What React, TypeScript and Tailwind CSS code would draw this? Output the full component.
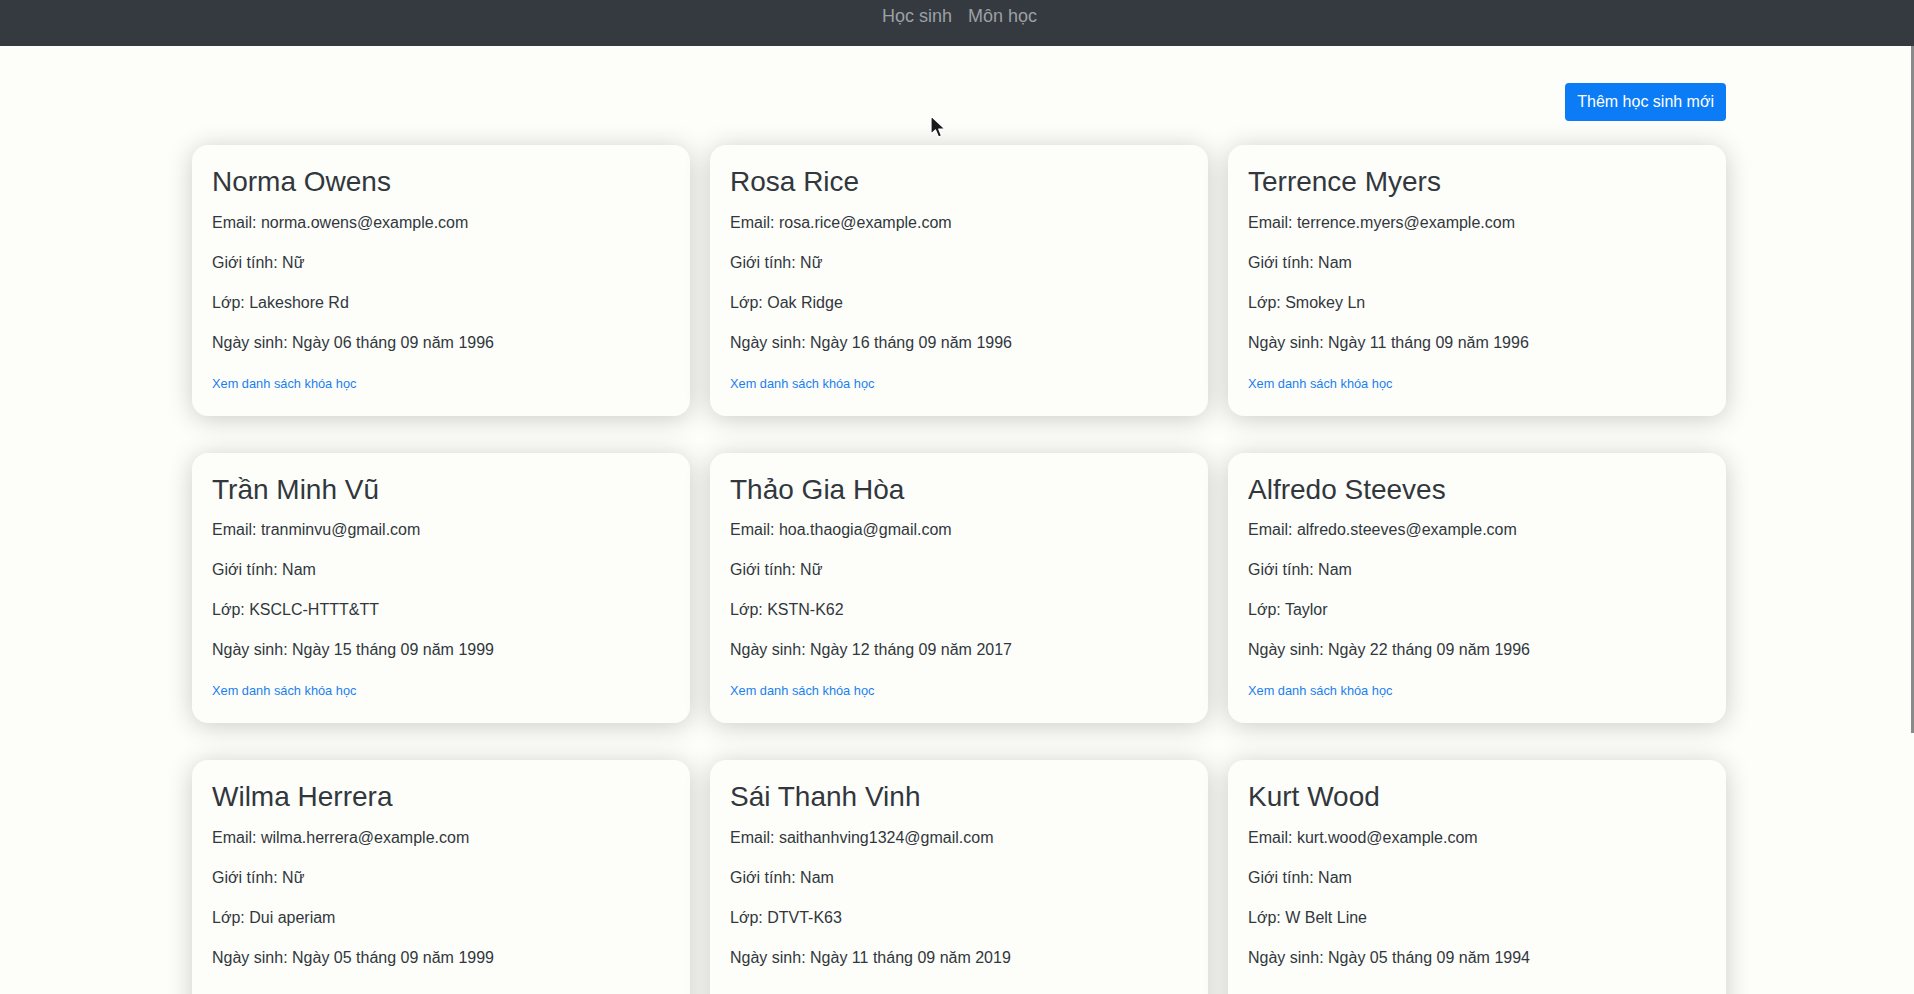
import React from "react";

type Student = {
  name: string;
  email: string;
  gender: string;
  cls: string;
  dob: string;
};

const students: Student[] = [
  { name: "Norma Owens", email: "norma.owens@example.com", gender: "Nữ", cls: "Lakeshore Rd", dob: "Ngày 06 tháng 09 năm 1996" },
  { name: "Rosa Rice", email: "rosa.rice@example.com", gender: "Nữ", cls: "Oak Ridge", dob: "Ngày 16 tháng 09 năm 1996" },
  { name: "Terrence Myers", email: "terrence.myers@example.com", gender: "Nam", cls: "Smokey Ln", dob: "Ngày 11 tháng 09 năm 1996" },
  { name: "Trần Minh Vũ", email: "tranminvu@gmail.com", gender: "Nam", cls: "KSCLC-HTTT&TT", dob: "Ngày 15 tháng 09 năm 1999" },
  { name: "Thảo Gia Hòa", email: "hoa.thaogia@gmail.com", gender: "Nữ", cls: "KSTN-K62", dob: "Ngày 12 tháng 09 năm 2017" },
  { name: "Alfredo Steeves", email: "alfredo.steeves@example.com", gender: "Nam", cls: "Taylor", dob: "Ngày 22 tháng 09 năm 1996" },
  { name: "Wilma Herrera", email: "wilma.herrera@example.com", gender: "Nữ", cls: "Dui aperiam", dob: "Ngày 05 tháng 09 năm 1999" },
  { name: "Sái Thanh Vinh", email: "saithanhving1324@gmail.com", gender: "Nam", cls: "DTVT-K63", dob: "Ngày 11 tháng 09 năm 2019" },
  { name: "Kurt Wood", email: "kurt.wood@example.com", gender: "Nam", cls: "W Belt Line", dob: "Ngày 05 tháng 09 năm 1994" },
];

function Card({ s }: { s: Student }) {
  return (
    <div className="rounded-[16px] bg-[#fdfefa] px-5 py-5 shadow-[0_3px_26px_rgba(0,0,0,0.2)]">
      <h3 className="mb-3 text-[28px] leading-[1.2] font-normal">{s.name}</h3>
      <p className="mb-4 text-base leading-6">Email: {s.email}</p>
      <p className="mb-4 text-base leading-6">Giới tính: {s.gender}</p>
      <p className="mb-4 text-base leading-6">Lớp: {s.cls}</p>
      <p className="mb-4 text-base leading-6">Ngày sinh: {s.dob}</p>
      <div className="text-base leading-6">
        <a className="text-[12.8px] text-[#1a7ff0]">Xem danh sách khóa học</a>
      </div>
    </div>
  );
}

export default function App() {
  return (
    <div
      className="relative h-[994px] overflow-hidden bg-[#fdfefa] text-[#31373d]"
      style={{ fontFamily: '"Liberation Sans", Arial, sans-serif' }}
    >
      <header className="flex h-[46px] justify-center bg-[#343a40] pt-[3px] pl-[5px]">
        <nav className="flex">
          <a className="px-2 text-[18px] leading-[27px] text-[#9da0a4]">Học sinh</a>
          <a className="px-2 text-[18px] leading-[27px] text-[#9da0a4]">Môn học</a>
        </nav>
      </header>
      <main className="ml-[192px] w-[1534px]">
        <div className="flex justify-end pt-[37px] pb-[24px]">
          <button className="h-[38px] rounded-[4px] bg-[#0b7cf5] px-3 text-base leading-6 text-white">
            Thêm học sinh mới
          </button>
        </div>
        <div className="grid grid-cols-3 gap-x-[20px] gap-y-[37px]">
          {students.map((s) => (
            <Card key={s.name} s={s} />
          ))}
        </div>
      </main>
      <div className="absolute right-0 top-[46px] h-[687px] w-[3px] bg-[#8a8a8a]" />
      <svg className="absolute left-[929px] top-[115px]" width="20" height="24" viewBox="0 0 20 24">
        <path d="M2 1 L2 19 L6.5 15 L9.5 22 L12.5 20.8 L9.7 14 L16 14 Z" fill="#1a1a1a" stroke="#ffffff" strokeWidth="1.2" strokeLinejoin="round" />
      </svg>
    </div>
  );
}
